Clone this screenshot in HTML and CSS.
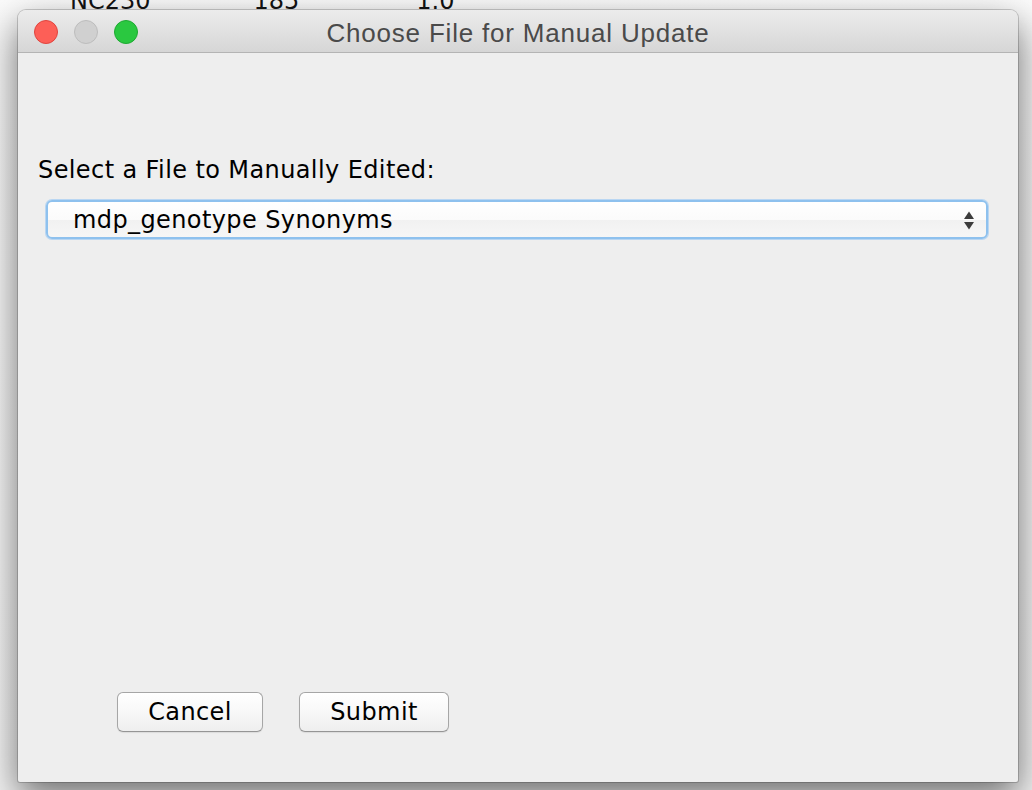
FILE: index.html
```html
<!DOCTYPE html>
<html>
<head>
<meta charset="utf-8">
<link rel="stylesheet" href="styles.css">
</head>
<body>
<div class="desktop">
  <div class="behind">
    <span class="bcell c1">NC230</span>
    <span class="bcell c2">185</span>
    <span class="bcell c3">1.0</span>
  </div>
  <div class="window">
    <div class="titlebar">
      <div class="lights">
        <span class="light red"></span>
        <span class="light gray"></span>
        <span class="light green"></span>
      </div>
      <div class="title">Choose File for Manual Update</div>
    </div>
    <div class="content">
      <div class="label">Select a File to Manually Edited:</div>
      <div class="combo">
        <span class="combo-text">mdp_genotype Synonyms</span>
        <svg class="arrows" width="14" height="24" viewBox="0 0 14 24">
          <path d="M7 3.5 L12 11 L2 11 Z" fill="#3c3c3c"/>
          <path d="M7 21.5 L12 14 L2 14 Z" fill="#3c3c3c"/>
        </svg>
      </div>
      <div class="spacer"></div>
      <div class="buttons">
        <button class="btn cancel">Cancel</button>
        <button class="btn submit">Submit</button>
      </div>
    </div>
  </div>
</div>
</body>
</html>
```

FILE: styles.css
```css
html, body {
  margin: 0;
  padding: 0;
}
body {
  width: 1032px;
  height: 790px;
  overflow: hidden;
  background: #fafafa;
}
.desktop {
  width: 1032px;
  height: 790px;
  overflow: hidden;
  background: linear-gradient(to bottom, #fbfbfb 0px, #f4f4f4 60px, #f1f1f1 100%);
}
.behind {
  height: 10px;
  overflow: hidden;
  display: flex;
  font-family: "DejaVu Sans", sans-serif;
  font-size: 24px;
  line-height: 10px;
  color: #111;
}
.bcell {
  display: block;
  margin-top: -4px;
}
.c1 { margin-left: 70px; }
.c2 { margin-left: 103px; }
.c3 { margin-left: 117px; }
.window {
  margin-left: 18px;
  width: 1000px;
  height: 772px;
  border-radius: 8px 8px 2px 2px;
  background: #eeeeee;
  box-shadow: 0 0 0 1px rgba(0,0,0,0.18), 0 14px 36px rgba(0,0,0,0.55);
  display: flex;
  flex-direction: column;
  overflow: hidden;
}
.titlebar {
  height: 43px;
  box-sizing: border-box;
  border-bottom: 1px solid #b4b4b4;
  background: linear-gradient(to bottom, #ececec 0%, #d6d6d6 100%);
  border-radius: 8px 8px 0 0;
  position: relative;
  display: flex;
  align-items: center;
  justify-content: center;
}
.lights {
  position: absolute;
  left: 16px;
  top: 10px;
  display: flex;
  gap: 16px;
}
.light {
  width: 24px;
  height: 24px;
  border-radius: 50%;
  box-sizing: border-box;
  display: block;
}
.red { background: #fd5f57; border: 1px solid #e0443e; }
.gray { background: #d0d0d0; border: 1px solid #bdbdbd; }
.green { background: #2ac840; border: 1px solid #1ea932; }
.title {
  font-family: "Liberation Sans", Arial, sans-serif;
  font-size: 26px;
  letter-spacing: 0.8px;
  color: #4a4a4a;
  margin-top: 4px;
}
.content {
  flex: 1;
  display: flex;
  flex-direction: column;
  padding: 102px 30px 50px 20px;
  font-family: "DejaVu Sans", sans-serif;
  color: #000;
  letter-spacing: 0.4px;
}
.label {
  font-size: 24px;
  line-height: 30px;
  height: 30px;
}
.combo {
  margin-top: 15px;
  margin-left: 8px;
  height: 39px;
  box-sizing: border-box;
  border: 2px solid #8ec1ee;
  border-radius: 6px;
  background: linear-gradient(to bottom, #ffffff 0%, #fbfbfb 50%, #f1f1f1 51%, #f6f6f6 100%);
  display: flex;
  align-items: center;
  padding: 0 10px 0 25px;
  box-shadow: 0 0 0 1px #b9d6f2;
}
.combo-text {
  flex: 1;
  font-size: 24px;
}
.arrows {
  display: block;
}
.spacer {
  flex: 1;
}
.buttons {
  display: flex;
  gap: 36px;
  margin-left: 79px;
}
.btn {
  height: 40px;
  box-sizing: border-box;
  border: 1px solid #a6a6a6;
  border-bottom-color: #959595;
  border-radius: 6px;
  background: linear-gradient(to bottom, #ffffff 0%, #f8f8f8 50%, #eeeeee 100%);
  font-family: "DejaVu Sans", sans-serif;
  font-size: 24px;
  letter-spacing: 0.4px;
  color: #000;
  padding: 0;
  box-shadow: 0 1px 1px rgba(0,0,0,0.08);
}
.cancel { width: 146px; }
.submit { width: 150px; }
```
